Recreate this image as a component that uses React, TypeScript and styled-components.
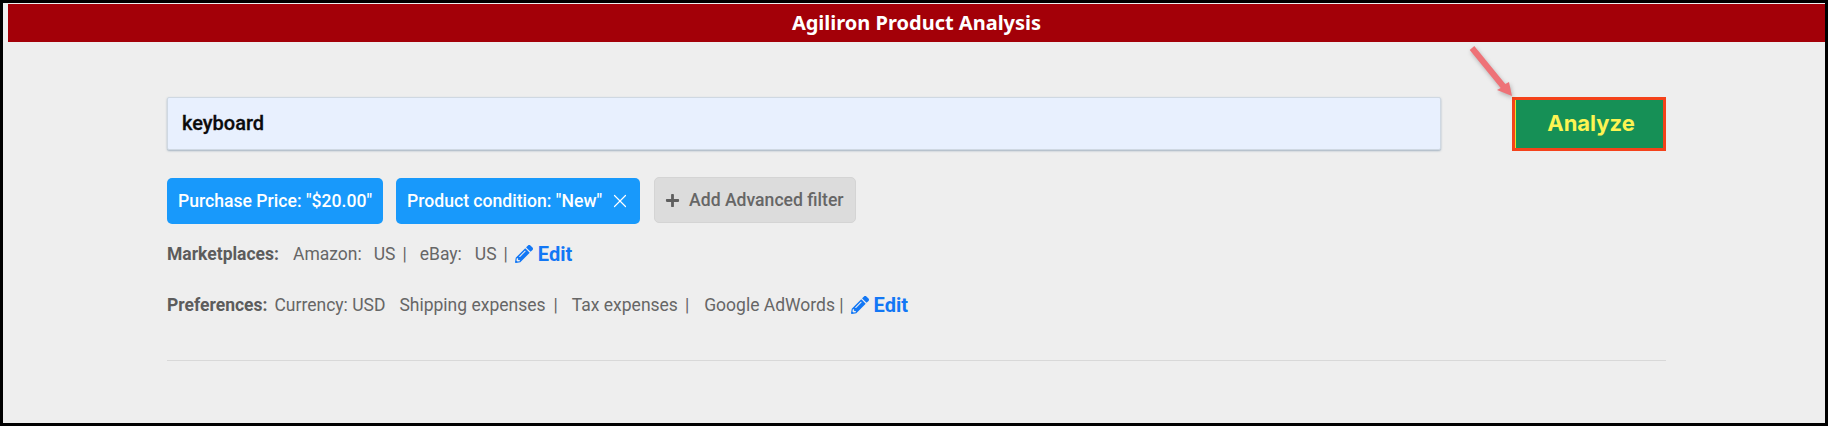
import styled, { createGlobalStyle } from "styled-components";
import { FaPencilAlt, FaPlus } from "react-icons/fa";
import { X } from "lucide-react";

const GlobalStyle = createGlobalStyle`
  html, body {
    margin: 0;
    padding: 0;
    background: #000;
  }
`;

const Frame = styled.div`
  position: relative;
  box-sizing: border-box;
  width: 1828px;
  height: 426px;
  overflow: hidden;
  border-style: solid;
  border-color: #000;
  border-width: 3px 3px 3px 3px;
  background: #eeeeee;
  font-family: Roboto, sans-serif;
`;

const Header = styled.div`
  height: 38px;
  margin: 1px 0 0 5px;
  background: #a30008;
  color: #fff;
  font-family: "Noto Sans", sans-serif;
  font-size: 20px;
  font-weight: 700;
  line-height: 38px;
  text-align: center;
`;

const Main = styled.div`
  display: flex;
  flex-direction: column;
  width: 1499px;
  margin: 54px 0 0 164px;
`;

const SearchRow = styled.div`
  display: flex;
  align-items: flex-start;
  justify-content: space-between;
`;

const SearchInput = styled.div`
  box-sizing: border-box;
  width: 1274px;
  height: 53px;
  margin-top: 1px;
  padding-left: 14px;
  background: #e8f0fe;
  border: 1px solid #cfd8e2;
  border-radius: 2px;
  box-shadow: 0 1px 2px rgba(90, 120, 150, 0.5);
  color: #0b0b0b;
  font-size: 20px;
  font-weight: 500;
  -webkit-text-stroke: 0.3px #0b0b0b;
  line-height: 50px;
`;

const AnalyzeButton = styled.div`
  box-sizing: border-box;
  width: 154px;
  height: 54px;
  margin-top: 1px;
  padding-left: 4px;
  background: #169056;
  border: 3px solid #f4421a;
  box-shadow: 3px -1px 0 -3px #eadf2a, inset 1px 0 0 #eadf2a;
  color: #fdf452;
  font-family: Inter, sans-serif;
  font-size: 22px;
  font-weight: 700;
  line-height: 47px;
  text-align: center;
`;

const ChipRow = styled.div`
  display: flex;
  align-items: flex-start;
  margin-top: 27px;
`;

const Chip = styled.div`
  display: flex;
  align-items: center;
  box-sizing: border-box;
  height: 46px;
  margin-right: 13px;
  padding: 0 11px;
  background: #1899fb;
  border-radius: 5px;
  color: #fff;
  font-size: 17.6px;
  font-weight: 500;
  white-space: nowrap;
`;

const ChipClose = styled(X)`
  margin: 0 -2px 0 7px;
  color: #fff;
`;

const AddFilter = styled.div`
  display: flex;
  align-items: center;
  box-sizing: border-box;
  width: 202px;
  height: 46px;
  margin: -1px 0 0 1px;
  padding-left: 10px;
  background: #dcdcdc;
  border: 1px solid #d4d4d4;
  border-radius: 5px;
  color: #666;
  font-size: 17.6px;
  font-weight: 500;
  white-space: nowrap;
`;

const AddIcon = styled(FaPlus)`
  width: 15px;
  height: 15px;
  margin-right: 9px;
  color: #5f5f5f;
`;

const InfoRow = styled.div<{ $top: number }>`
  display: flex;
  align-items: center;
  height: 24px;
  margin-top: ${(p) => p.$top}px;
  color: #666;
  font-size: 17.5px;
  white-space: pre;
`;

const Label = styled.span`
  color: #5c5c5c;
  font-weight: 700;
`;

const Item = styled.span<{ $left: number }>`
  margin-left: ${(p) => p.$left}px;
`;

const EditLink = styled.span<{ $left: number }>`
  display: flex;
  align-items: center;
  margin-left: ${(p) => p.$left}px;
  color: #1277f5;
  font-size: 20px;
  font-weight: 700;
`;

const EditIcon = styled(FaPencilAlt)`
  width: 18px;
  height: 18px;
  margin-right: 5px;
`;

const Divider = styled.div`
  margin-top: 43px;
  border-bottom: 1px solid #d8d8d8;
`;

const ArrowMark = styled.svg`
  position: absolute;
  left: 1466px;
  top: 43px;
  filter: drop-shadow(1px 2px 2px rgba(0, 0, 0, 0.25));
`;

const App = (): JSX.Element => {
  return (
    <>
      <GlobalStyle />
      <Frame>
        <Header>Agiliron Product Analysis</Header>
        <Main>
          <SearchRow>
            <SearchInput>keyboard</SearchInput>
            <AnalyzeButton>Analyze</AnalyzeButton>
          </SearchRow>
          <ChipRow>
            <Chip>Purchase Price: "$20.00"</Chip>
            <Chip>
              Product condition: "New"
              <ChipClose size={22} strokeWidth={1.3} />
            </Chip>
            <AddFilter>
              <AddIcon />
              Add Advanced filter
            </AddFilter>
          </ChipRow>
          <InfoRow $top={18}>
            <Label>Marketplaces:</Label>
            <Item $left={14}>Amazon:</Item>
            <Item $left={12}>US</Item>
            <Item $left={7}>|</Item>
            <Item $left={13}>eBay:</Item>
            <Item $left={13}>US</Item>
            <Item $left={7}>|</Item>
            <EditLink $left={7}>
              <EditIcon />
              Edit
            </EditLink>
          </InfoRow>
          <InfoRow $top={27}>
            <Label>Preferences:</Label>
            <Item $left={7}>Currency: USD</Item>
            <Item $left={14}>Shipping expenses</Item>
            <Item $left={8}>|</Item>
            <Item $left={14}>Tax expenses</Item>
            <Item $left={7}>|</Item>
            <Item $left={15}>Google AdWords |</Item>
            <EditLink $left={7}>
              <EditIcon />
              Edit
            </EditLink>
          </InfoRow>
          <Divider />
        </Main>
        <ArrowMark width="50" height="56" viewBox="0 0 50 56">
          <path
            d="M5.3 0.1 L36.3 38.1 L40 36 L43 50 L28 44 L31.7 41.9 L0.7 3.9 Z"
            fill="#ee7277"
          />
        </ArrowMark>
      </Frame>
    </>
  );
};

export default App;
